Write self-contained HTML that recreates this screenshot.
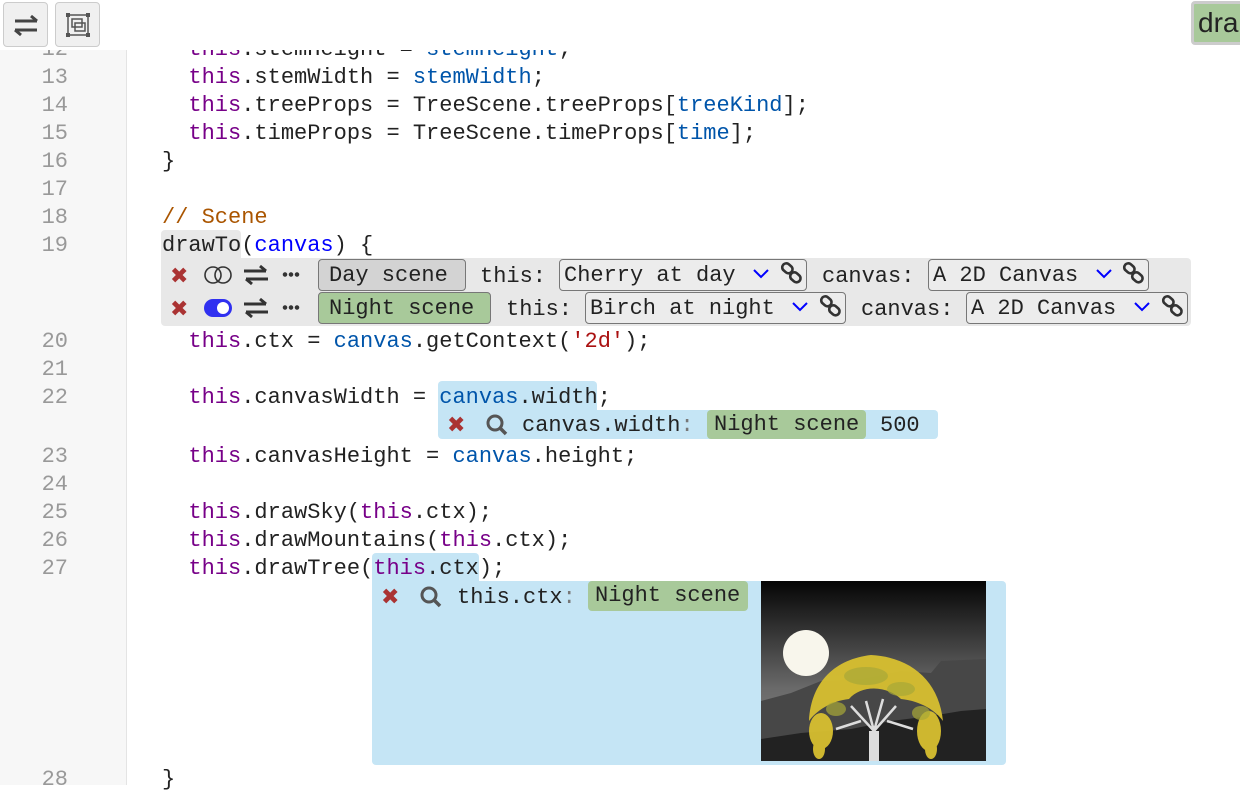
<!DOCTYPE html>
<html><head><style>
*{margin:0;padding:0;box-sizing:border-box}
body{width:1240px;height:785px;overflow:hidden;background:#fff;font-family:"Liberation Mono",monospace;font-size:22px;color:#222;position:relative}
.g{position:absolute;left:0;top:0;width:127px;height:785px;background:#f7f7f7;border-right:1px solid #e4e4e4}
.n{position:absolute;left:0;width:68px;text-align:right;color:#999;height:28px;line-height:28px;margin-top:2px}
.l{position:absolute;left:162px;height:28px;line-height:28px;white-space:pre;margin-top:2px}
.k{color:#770088}.v{color:#0055aa}.b{color:#0000ff}.c{color:#aa5500}.s{color:#aa1111}
.abs{position:absolute}
.row{position:absolute;height:33px;line-height:32px;white-space:pre;display:flex;align-items:center;margin-top:1px}
.box{position:absolute;border:1px solid #777;border-radius:4px;height:32px;line-height:31px;white-space:pre;padding-left:4px}
.x{color:#a33;font-weight:bold;font-family:"DejaVu Sans",sans-serif;font-size:22px}
.tb{position:absolute;top:2px;width:45px;height:45px;background:#f0f0f0;border:1px solid #ccc;border-radius:4px}
</style></head><body>
<div class="g"></div>
<div class="n" style="top:34px">12</div>
<div class="n" style="top:62px">13</div>
<div class="n" style="top:90px">14</div>
<div class="n" style="top:118px">15</div>
<div class="n" style="top:146px">16</div>
<div class="n" style="top:174px">17</div>
<div class="n" style="top:202px">18</div>
<div class="n" style="top:230px">19</div>
<div class="n" style="top:326px">20</div>
<div class="n" style="top:354px">21</div>
<div class="n" style="top:382px">22</div>
<div class="n" style="top:441px">23</div>
<div class="n" style="top:469px">24</div>
<div class="n" style="top:497px">25</div>
<div class="n" style="top:525px">26</div>
<div class="n" style="top:553px">27</div>
<div class="n" style="top:764px">28</div>

<div class="l" style="top:34px">  <span class="k">this</span>.stemHeight = <span class="v">stemHeight</span>;</div>
<div class="l" style="top:62px">  <span class="k">this</span>.stemWidth = <span class="v">stemWidth</span>;</div>
<div class="l" style="top:90px">  <span class="k">this</span>.treeProps = TreeScene.treeProps[<span class="v">treeKind</span>];</div>
<div class="l" style="top:118px">  <span class="k">this</span>.timeProps = TreeScene.timeProps[<span class="v">time</span>];</div>
<div class="l" style="top:146px">}</div>
<div class="l" style="top:202px"><span class="c">// Scene</span></div>
<div class="abs" style="left:161px;top:230px;width:80px;height:30px;background:#e8e8e8;border-radius:4px 4px 0 0"></div>
<div class="l" style="top:230px">drawTo(<span class="b">canvas</span>) {</div>

<div class="abs" style="left:161px;top:258px;width:1030px;height:68px;background:#e8e8e8;border-radius:0 4px 4px 4px"></div>
<div class="row" style="left:170px;top:259px"><span class="x">✖</span></div>
<div class="row" style="left:170px;top:292px"><span class="x">✖</span></div>
<svg class="abs" style="left:203px;top:265px" width="30" height="20"><circle cx="10" cy="10" r="8" fill="none" stroke="#333" stroke-width="1.6"/><circle cx="20" cy="10" r="8" fill="none" stroke="#333" stroke-width="1.6"/></svg>
<svg class="abs" style="left:203px;top:298px" width="30" height="20"><rect x="1" y="1" width="28" height="18" rx="9" fill="#3030f0"/><circle cx="20" cy="10" r="6" fill="#fff"/></svg>
<svg class="abs" style="left:242px;top:264px" width="28" height="22"><path d="M2 7H24M18 2L24 7M26 15H4M10 20L4 15" stroke="#333" stroke-width="3" fill="none"/></svg>
<svg class="abs" style="left:242px;top:297px" width="28" height="22"><path d="M2 7H24M18 2L24 7M26 15H4M10 20L4 15" stroke="#333" stroke-width="3" fill="none"/></svg>
<div class="abs" style="left:282px;top:272px;width:18px;height:5px;background:radial-gradient(circle,#333 2px,transparent 2.5px) 0 0/6px 5px"></div>
<div class="abs" style="left:282px;top:305px;width:18px;height:5px;background:radial-gradient(circle,#333 2px,transparent 2.5px) 0 0/6px 5px"></div>

<div class="box" style="left:318px;top:259px;width:148px;background:#d3d3d3;padding-left:10px">Day scene</div>
<div class="row" style="left:480px;top:259px">this:</div>
<div class="box" style="left:559px;top:259px;width:248px;background:#ececec">Cherry at day</div>
<div class="row" style="left:822px;top:259px">canvas:</div>
<div class="box" style="left:928px;top:259px;width:221px;background:#ececec">A 2D Canvas</div>

<div class="box" style="left:318px;top:292px;width:173px;background:#a8c99a;padding-left:10px">Night scene</div>
<div class="row" style="left:506px;top:292px">this:</div>
<div class="box" style="left:585px;top:292px;width:261px;background:#ececec">Birch at night</div>
<div class="row" style="left:861px;top:292px">canvas:</div>
<div class="box" style="left:966px;top:292px;width:222px;background:#ececec">A 2D Canvas</div>

<svg class="abs" style="left:752px;top:267px" width="18" height="14"><path d="M2 3L9 10L16 3" stroke="#00f" stroke-width="2" fill="none"/></svg>
<svg class="abs" style="left:1095px;top:267px" width="18" height="14"><path d="M2 3L9 10L16 3" stroke="#00f" stroke-width="2" fill="none"/></svg>
<svg class="abs" style="left:791px;top:300px" width="18" height="14"><path d="M2 3L9 10L16 3" stroke="#00f" stroke-width="2" fill="none"/></svg>
<svg class="abs" style="left:1133px;top:300px" width="18" height="14"><path d="M2 3L9 10L16 3" stroke="#00f" stroke-width="2" fill="none"/></svg>
<svg class="abs" style="left:780px;top:261px" width="24" height="24"><g fill="none" stroke="#333" stroke-width="2.6"><rect x="2" y="3" width="11" height="8" rx="4" transform="rotate(40 7 7)"/><rect x="10" y="12" width="11" height="8" rx="4" transform="rotate(40 15 16)"/></g></svg>
<svg class="abs" style="left:1122px;top:261px" width="24" height="24"><g fill="none" stroke="#333" stroke-width="2.6"><rect x="2" y="3" width="11" height="8" rx="4" transform="rotate(40 7 7)"/><rect x="10" y="12" width="11" height="8" rx="4" transform="rotate(40 15 16)"/></g></svg>
<svg class="abs" style="left:819px;top:294px" width="24" height="24"><g fill="none" stroke="#333" stroke-width="2.6"><rect x="2" y="3" width="11" height="8" rx="4" transform="rotate(40 7 7)"/><rect x="10" y="12" width="11" height="8" rx="4" transform="rotate(40 15 16)"/></g></svg>
<svg class="abs" style="left:1161px;top:294px" width="24" height="24"><g fill="none" stroke="#333" stroke-width="2.6"><rect x="2" y="3" width="11" height="8" rx="4" transform="rotate(40 7 7)"/><rect x="10" y="12" width="11" height="8" rx="4" transform="rotate(40 15 16)"/></g></svg>

<div class="l" style="top:326px">  <span class="k">this</span>.ctx = <span class="v">canvas</span>.getContext(<span class="s">'2d'</span>);</div>
<div class="abs" style="left:438px;top:381px;width:159px;height:30px;background:#c5e5f5;border-radius:4px 4px 0 0"></div>
<div class="l" style="top:382px">  <span class="k">this</span>.canvasWidth = <span class="v">canvas</span>.width;</div>
<div class="abs" style="left:438px;top:410px;width:500px;height:29px;background:#c5e5f5;border-radius:0 4px 4px 4px"></div>
<div class="row" style="left:447px;top:408px"><span class="x">✖</span></div>
<svg class="abs" style="left:485px;top:413px" width="24" height="24"><circle cx="10" cy="10" r="7" fill="none" stroke="#555" stroke-width="3"/><path d="M15 15L21 21" stroke="#555" stroke-width="3.5"/></svg>
<div class="row" style="left:522px;top:408px">canvas.width<span style="color:#777">:</span></div>
<div class="abs" style="left:707px;top:410px;width:159px;height:29px;background:#a8c99a;border-radius:4px;line-height:29px;padding-left:7px;white-space:pre">Night scene</div>
<div class="row" style="left:880px;top:408px">500</div>

<div class="l" style="top:441px">  <span class="k">this</span>.canvasHeight = <span class="v">canvas</span>.height;</div>
<div class="l" style="top:497px">  <span class="k">this</span>.drawSky(<span class="k">this</span>.ctx);</div>
<div class="l" style="top:525px">  <span class="k">this</span>.drawMountains(<span class="k">this</span>.ctx);</div>
<div class="abs" style="left:372px;top:553px;width:107px;height:29px;background:#c5e5f5;border-radius:4px 4px 0 0"></div>
<div class="l" style="top:553px">  <span class="k">this</span>.drawTree(<span class="k">this</span>.ctx);</div>
<div class="abs" style="left:372px;top:581px;width:634px;height:184px;background:#c5e5f5;border-radius:0 4px 4px 4px"></div>
<div class="row" style="left:381px;top:580px"><span class="x">✖</span></div>
<svg class="abs" style="left:419px;top:585px" width="24" height="24"><circle cx="10" cy="10" r="7" fill="none" stroke="#555" stroke-width="3"/><path d="M15 15L21 21" stroke="#555" stroke-width="3.5"/></svg>
<div class="row" style="left:457px;top:580px">this.ctx<span style="color:#777">:</span></div>
<div class="abs" style="left:588px;top:581px;width:160px;height:30px;background:#a8c99a;border-radius:4px;line-height:30px;padding-left:7px;white-space:pre">Night scene</div>

<svg class="abs" style="left:761px;top:581px" width="225" height="180">
<defs><linearGradient id="sk" x1="0" y1="0" x2="0" y2="1"><stop offset="0" stop-color="#050505"/><stop offset="0.6" stop-color="#6a6a6a"/><stop offset="1" stop-color="#888"/></linearGradient></defs>
<rect width="225" height="180" fill="url(#sk)"/>
<path d="M0 120L30 112L60 100L100 98L140 90L170 92L180 80L225 78L225 180L0 180Z" fill="#474747"/>
<path d="M0 158L40 152L90 148L130 140L170 135L200 130L225 128L225 180L0 180Z" fill="#222"/>
<circle cx="45" cy="72" r="23" fill="#f8f6ec"/>
<g stroke="#ddd" stroke-width="2.5" fill="none"><path d="M113 180V150L90 125M113 150L135 125M113 150L105 120M113 150L122 118M100 140L75 148M126 140L152 148"/></g>
<rect x="108" y="150" width="10" height="30" fill="#ddd"/>
<g fill="#d8c030" opacity="0.95">
<path d="M48 140C50 100 75 78 110 74C150 76 178 100 182 140C175 130 160 120 140 118C125 104 100 104 88 118C70 120 55 130 48 140Z"/>
<ellipse cx="60" cy="150" rx="12" ry="18"/><ellipse cx="168" cy="150" rx="12" ry="20"/>
<ellipse cx="58" cy="168" rx="6" ry="10"/><ellipse cx="170" cy="168" rx="6" ry="10"/>
</g>
<g fill="#a8a838" opacity="0.7"><ellipse cx="105" cy="95" rx="22" ry="9"/><ellipse cx="140" cy="108" rx="14" ry="7"/><ellipse cx="75" cy="128" rx="10" ry="7"/><ellipse cx="160" cy="132" rx="9" ry="7"/></g>
</svg>
<div class="l" style="top:764px">}</div>

<div class="abs" style="left:0;top:0;width:1240px;height:50px;background:#fff"></div>
<div class="tb" style="left:3px"><svg width="45" height="45"><path d="M11 18H33M27 13L33 18M33 27H11M17 32L11 27" stroke="#444" stroke-width="3" fill="none"/></svg></div>
<div class="tb" style="left:55px"><svg width="45" height="45"><g fill="none" stroke="#555" stroke-width="1.5"><rect x="12" y="12" width="20" height="20"/><rect x="16" y="16" width="10" height="8"/><rect x="19" y="20" width="10" height="8"/></g><g fill="#555"><rect x="10" y="10" width="4" height="4"/><rect x="30" y="10" width="4" height="4"/><rect x="10" y="30" width="4" height="4"/><rect x="30" y="30" width="4" height="4"/></g></svg></div>
<div class="abs" style="left:1191px;top:1px;width:60px;height:44px;background:#a8c99a;border:3px solid #ccc;border-radius:4px;font-family:'Liberation Sans',sans-serif;font-size:28px;line-height:38px;padding-left:4px">dra</div>
</body></html>
